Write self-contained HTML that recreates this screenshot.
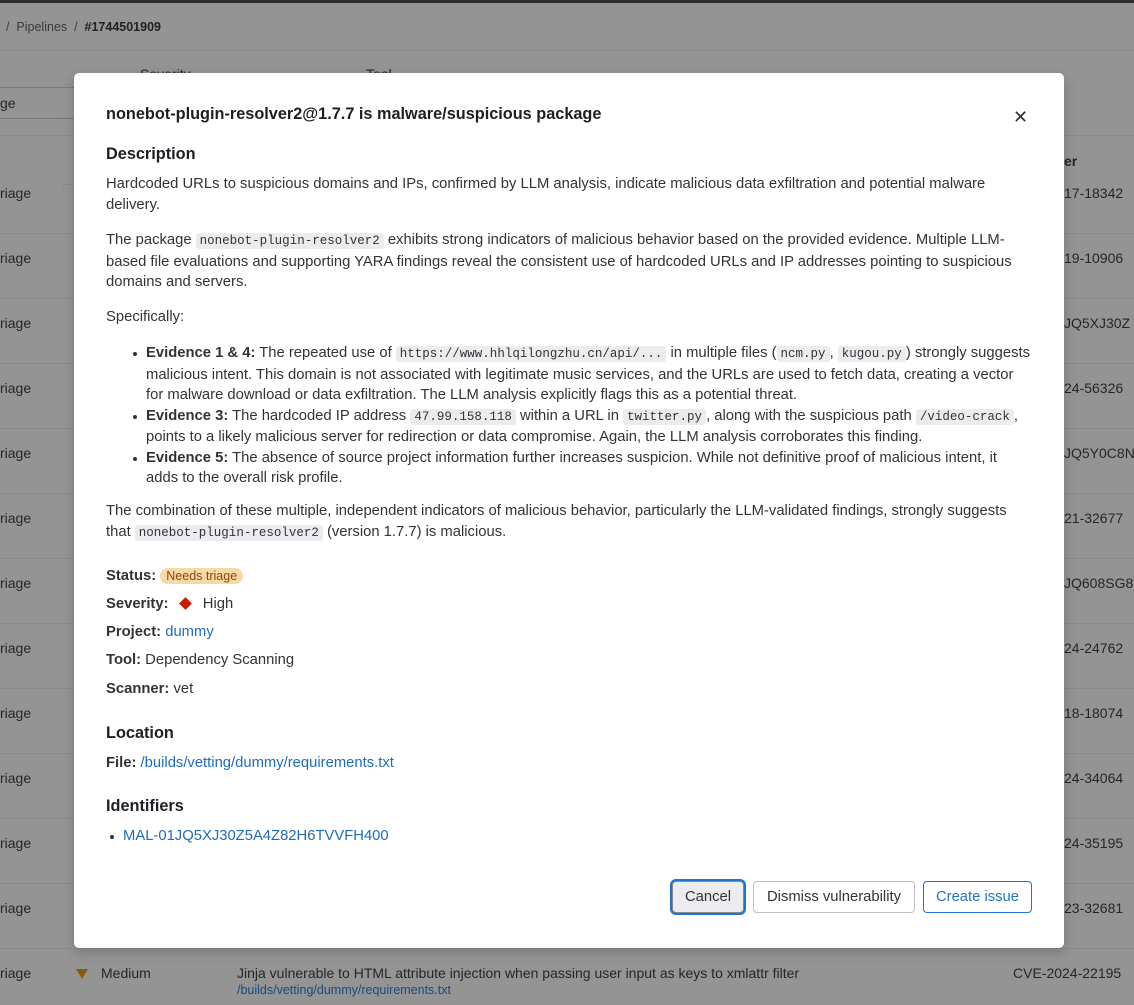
<!DOCTYPE html>
<html><head><meta charset="utf-8"><style>
*{box-sizing:border-box;margin:0;padding:0}
body{width:1134px;height:1005px;overflow:hidden;background:#949494;font-family:"Liberation Sans",sans-serif;color:#2a2a2a;position:relative}
.bg{position:absolute;color:#262626;font-size:14px;white-space:nowrap}
.hl{position:absolute;left:0;right:0;height:1px;background:#8a8a8a}
.modal{position:absolute;left:74px;top:73px;width:990px;height:875px;background:#fff;border-radius:5px;box-shadow:0 4px 12px rgba(0,0,0,.2)}
.a{position:absolute;left:32px;white-space:nowrap;font-size:14.8px;line-height:20.5px;color:#333238}
h2{font-size:16.3px;font-weight:bold;color:#1f1e24}
b{color:#333238}
code{font-family:"Liberation Mono",monospace;font-size:12.5px;background:#ececef;border-radius:3px;padding:1px 4px}
a{color:#1f6bbd;text-decoration:none}
ul{list-style:none}
li{position:relative;padding-left:40px}
li:before{content:"";position:absolute;left:27px;top:9px;width:4px;height:4px;border-radius:50%;background:#333}
.btn{position:absolute;top:808px;height:32px;border:1px solid #bfbfc3;border-radius:4px;font-size:14.8px;line-height:30px;text-align:center;color:#333238;background:#fff}
</style></head><body>
<div style="position:absolute;left:0;top:0;width:1134px;height:3px;background:#2d2d2d"></div>
<div class="bg" style="left:6px;top:20px;font-size:12.5px;color:#3a3a3a">/&nbsp;&nbsp;Pipelines&nbsp;&nbsp;/&nbsp;&nbsp;<b style="color:#222">#1744501909</b></div>
<div class="hl" style="top:50px"></div>
<div class="bg" style="left:140px;top:66px">Severity</div><div class="bg" style="left:366px;top:66px">Tool</div>
<div style="position:absolute;left:-5px;top:87px;width:85px;height:32px;border:1px solid #7a7a7a;border-radius:3px"></div>
<div class="bg" style="left:0;top:95px">ge</div>
<div class="hl" style="top:135px"></div>
<div class="bg" style="left:1064px;top:153px;font-weight:bold">er</div>
<div class="hl" style="top:184px;left:62px;right:1060px"></div>
<div id="rows"></div>
<div class="bg" style="left:0;top:965px">riage</div>
<div style="position:absolute;left:76px;top:969px;width:0;height:0;border-left:6px solid transparent;border-right:6px solid transparent;border-top:10px solid #8a5a0c"></div>
<div class="bg" style="left:101px;top:965px">Medium</div>
<div class="bg" style="left:237px;top:965px">Jinja vulnerable to HTML attribute injection when passing user input as keys to xmlattr filter</div>
<div class="bg" style="left:237px;top:983px;font-size:12.5px;color:#1a4a80">/builds/vetting/dummy/requirements.txt</div>
<div class="bg" style="left:1013px;top:965px">CVE-2024-22195</div>
<script>
var ids=["17-18342","19-10906","JQ5XJ30Z","24-56326","JQ5Y0C8N","21-32677","JQ608SG8","24-24762","18-18074","24-34064","24-35195","23-32681"];
var h="";for(var i=0;i<12;i++){var y=185+65*i;h+='<div class="bg" style="left:0;top:'+y+'px">riage</div><div class="bg" style="left:1064px;top:'+y+'px">'+ids[i]+'</div><div class="hl" style="top:'+(y+48)+'px"></div>';}
document.getElementById("rows").innerHTML=h;
</script>
<div class="modal">
<div class="a" style="top:31px"><h2>nonebot-plugin-resolver2@1.7.7 is malware/suspicious package</h2></div>
<div style="position:absolute;left:939px;top:34px;font-size:18px;line-height:20px;color:#333">&#x2715;</div>
<div class="a" style="top:71px"><h2>Description</h2></div>
<div class="a" style="top:101px">Hardcoded URLs to suspicious domains and IPs, confirmed by LLM analysis, indicate malicious data exfiltration and potential malware<br>delivery.</div>
<div class="a" style="top:157px">The package <code>nonebot-plugin-resolver2</code> exhibits strong indicators of malicious behavior based on the provided evidence. Multiple LLM-<br>based file evaluations and supporting YARA findings reveal the consistent use of hardcoded URLs and IP addresses pointing to suspicious<br>domains and servers.</div>
<div class="a" style="top:234px">Specifically:</div>
<ul class="a" style="top:270px;left:32px">
<li><b>Evidence 1 &amp; 4:</b> The repeated use of <code>https://www.hhlqilongzhu.cn/api/...</code> in multiple files (<code>ncm.py</code>, <code>kugou.py</code>) strongly suggests<br>malicious intent. This domain is not associated with legitimate music services, and the URLs are used to fetch data, creating a vector<br>for malware download or data exfiltration. The LLM analysis explicitly flags this as a potential threat.</li>
<li><b>Evidence 3:</b> The hardcoded IP address <code>47.99.158.118</code> within a URL in <code>twitter.py</code>, along with the suspicious path <code>/video-crack</code>,<br>points to a likely malicious server for redirection or data compromise. Again, the LLM analysis corroborates this finding.</li>
<li><b>Evidence 5:</b> The absence of source project information further increases suspicion. While not definitive proof of malicious intent, it<br>adds to the overall risk profile.</li>
</ul>
<div class="a" style="top:428px">The combination of these multiple, independent indicators of malicious behavior, particularly the LLM-validated findings, strongly suggests<br>that <code>nonebot-plugin-resolver2</code> (version 1.7.7) is malicious.</div>
<div class="a" style="top:493px"><b>Status:</b> <span style="background:#f5d9a8;color:#8f4700;border-radius:9px;padding:1px 6px;font-size:12.5px">Needs triage</span></div>
<div class="a" style="top:521px"><b>Severity:</b> <span style="display:inline-block;width:9px;height:9px;background:#c91c00;transform:rotate(45deg);margin:0 9px 0 8px"></span> High</div>
<div class="a" style="top:549px"><b>Project:</b> <a>dummy</a></div>
<div class="a" style="top:577px"><b>Tool:</b> Dependency Scanning</div>
<div class="a" style="top:606px"><b>Scanner:</b> vet</div>
<div class="a" style="top:650px"><h2>Location</h2></div>
<div class="a" style="top:680px"><b>File:</b> <a>/builds/vetting/dummy/requirements.txt</a></div>
<div class="a" style="top:723px"><h2>Identifiers</h2></div>
<ul class="a" style="top:753px;left:32px"><li style="padding-left:17px"><a>MAL-01JQ5XJ30Z5A4Z82H6TVVFH400</a></li></ul>
<style>ul[style*="753px"] li:before{left:4px}</style>
<div class="btn" style="left:598px;width:72px;background:#ececef;border-color:#888;box-shadow:0 0 0 2px #1f75cb">Cancel</div>
<div class="btn" style="left:679px;width:162px">Dismiss vulnerability</div>
<div class="btn" style="left:849px;width:109px;border-color:#1f75cb;color:#1f75cb">Create issue</div>
</div>
</body></html>
